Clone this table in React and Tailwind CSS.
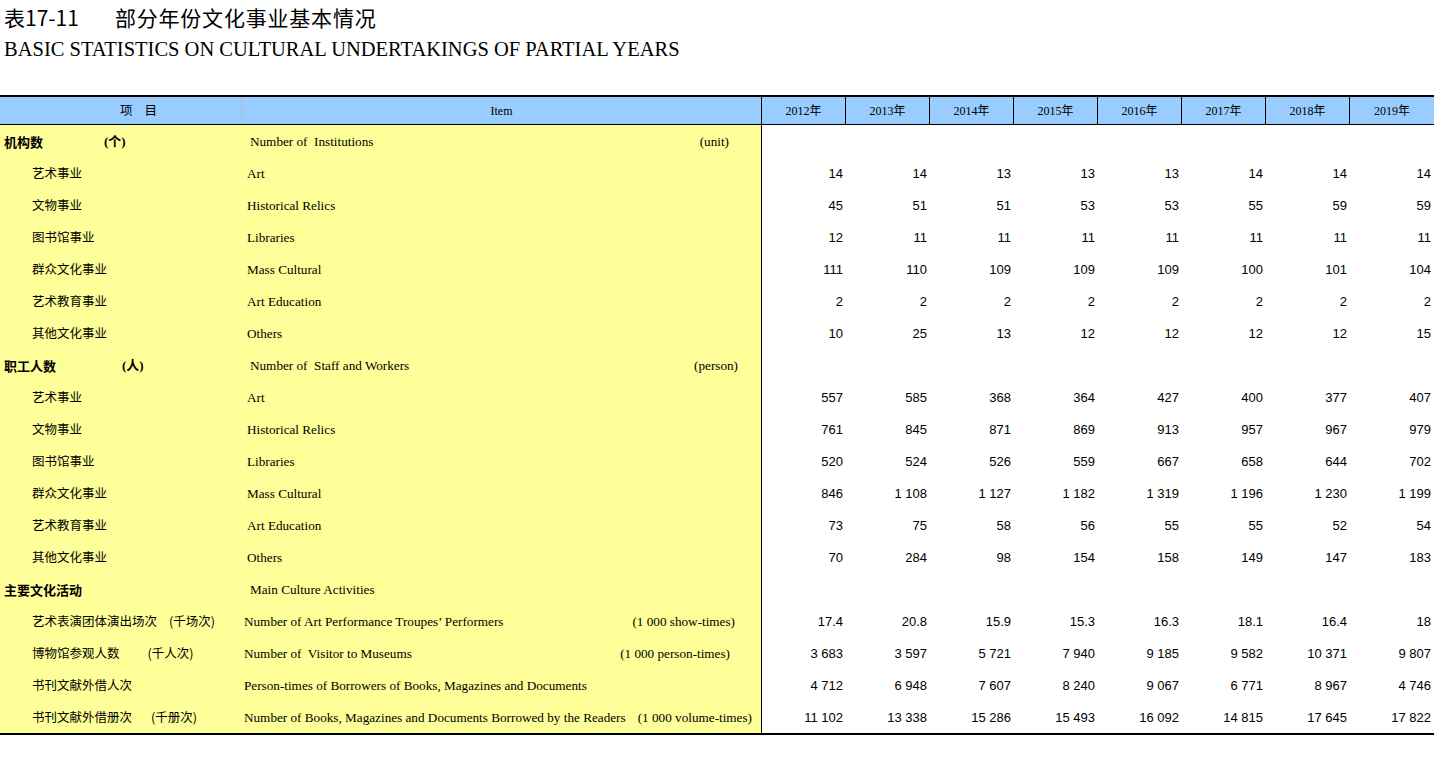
import React from 'react';

const serif = "font-['Liberation_Serif','Times_New_Roman','Noto_Sans_CJK_SC',serif]";
const cjk = "font-['Noto_Sans_CJK_SC','Liberation_Sans',sans-serif]";
const arial = "font-['Liberation_Sans',Arial,sans-serif]";

const years = ['2012', '2013', '2014', '2015', '2016', '2017', '2018', '2019'];

// kind: head = bold group title, sub = indented item
const rows = [
  { kind: 'head', zh: '机构数', zhUnit: '(个)', zhUnitX: 'pl-[61px]', en: 'Number of  Institutions', enX: 'pl-[8px]', unit: '(unit)', unitR: 'pr-[32px]' },
  { zh: '艺术事业', en: 'Art', vals: ['14', '14', '13', '13', '13', '14', '14', '14'] },
  { zh: '文物事业', en: 'Historical Relics', vals: ['45', '51', '51', '53', '53', '55', '59', '59'] },
  { zh: '图书馆事业', en: 'Libraries', vals: ['12', '11', '11', '11', '11', '11', '11', '11'] },
  { zh: '群众文化事业', en: 'Mass Cultural', vals: ['111', '110', '109', '109', '109', '100', '101', '104'] },
  { zh: '艺术教育事业', en: 'Art Education', vals: ['2', '2', '2', '2', '2', '2', '2', '2'] },
  { zh: '其他文化事业', en: 'Others', vals: ['10', '25', '13', '12', '12', '12', '12', '15'] },
  { kind: 'head', zh: '职工人数', zhUnit: '(人)', zhUnitX: 'pl-[66px]', en: 'Number of  Staff and Workers', enX: 'pl-[8px]', unit: '(person)', unitR: 'pr-[23px]' },
  { zh: '艺术事业', en: 'Art', vals: ['557', '585', '368', '364', '427', '400', '377', '407'] },
  { zh: '文物事业', en: 'Historical Relics', vals: ['761', '845', '871', '869', '913', '957', '967', '979'] },
  { zh: '图书馆事业', en: 'Libraries', vals: ['520', '524', '526', '559', '667', '658', '644', '702'] },
  { zh: '群众文化事业', en: 'Mass Cultural', vals: ['846', '1 108', '1 127', '1 182', '1 319', '1 196', '1 230', '1 199'] },
  { zh: '艺术教育事业', en: 'Art Education', vals: ['73', '75', '58', '56', '55', '55', '52', '54'] },
  { zh: '其他文化事业', en: 'Others', vals: ['70', '284', '98', '154', '158', '149', '147', '183'] },
  { kind: 'head', zh: '主要文化活动', en: 'Main Culture Activities', enX: 'pl-[8px]' },
  { zh: '艺术表演团体演出场次', zhUnit: '(千场次)', zhUnitX: 'pl-[12px]', en: 'Number of Art Performance Troupes’ Performers', enX: 'pl-[2px]', unit: '(1 000 show-times)', unitR: 'pr-[26px]', vals: ['17.4', '20.8', '15.9', '15.3', '16.3', '18.1', '16.4', '18'] },
  { zh: '博物馆参观人数', zhUnit: '(千人次)', zhUnitX: 'pl-[28px]', en: 'Number of  Visitor to Museums', enX: 'pl-[2px]', unit: '(1 000 person-times)', unitR: 'pr-[31px]', vals: ['3 683', '3 597', '5 721', '7 940', '9 185', '9 582', '10 371', '9 807'] },
  { zh: '书刊文献外借人次', en: 'Person-times of Borrowers of Books, Magazines and Documents', enX: 'pl-[2px]', vals: ['4 712', '6 948', '7 607', '8 240', '9 067', '6 771', '8 967', '4 746'] },
  { zh: '书刊文献外借册次', zhUnit: '(千册次)', zhUnitX: 'pl-[19px]', en: 'Number of Books, Magazines and Documents Borrowed by the Readers', enX: 'pl-[2px]', unit: '(1 000 volume-times)', unitR: 'pr-[9px]', vals: ['11 102', '13 338', '15 286', '15 493', '16 092', '14 815', '17 645', '17 822'] },
];

const grid = 'grid grid-cols-[242px_520px_repeat(8,84px)]';

function BodyRow({ row }) {
  const head = row.kind === 'head';
  return (
    <div className={`${grid} h-8`}>
      <div className={`bg-[#ffff99] flex items-center pt-[1px] ${head ? 'pl-[4px]' : 'pl-[32px]'}`}>
        <span className={`${cjk} ${head ? 'text-[13px] font-bold' : 'text-[12.5px]'} text-black whitespace-nowrap`}>{row.zh}</span>
        {row.zhUnit && (
          <span className={`${head ? serif + ' text-[13px] font-bold' : cjk + ' text-[12.5px]'} ${row.zhUnitX} text-black whitespace-nowrap`}>{row.zhUnit}</span>
        )}
      </div>
      <div className={`bg-[#ffff99] border-r border-black flex items-center justify-between pt-[1px] ${row.enX || 'pl-[5px]'} ${row.unitR || ''}`}>
        <span className={`${serif} text-[13.2px] text-black whitespace-pre`}>{row.en}</span>
        {row.unit && <span className={`${serif} text-[13.2px] text-black whitespace-pre`}>{row.unit}</span>}
      </div>
      {years.map((y, i) => (
        <div key={y} className="flex items-center justify-end pr-[3px] pt-[2px]">
          <span className={`${arial} text-[13px] text-black whitespace-pre`}>{row.vals ? row.vals[i] : ''}</span>
        </div>
      ))}
    </div>
  );
}

export default function App() {
  return (
    <div className="w-[1435px] min-h-[766px] bg-white">
      <div className="px-[4px]">
        <div className={`${cjk} text-[21px] leading-[24px] pt-[5px] text-black flex whitespace-nowrap`}>
          <span>表17-11</span>
          <span className="pl-[36px] tracking-[0.8px]">部分年份文化事业基本情况</span>
        </div>
        <div className={`${serif} text-[20.5px] leading-[24px] mt-[8px] text-black whitespace-nowrap`}>
          BASIC STATISTICS ON CULTURAL UNDERTAKINGS OF PARTIAL YEARS
        </div>
      </div>

      <div className="mt-[34px] w-[1434px] border-t-2 border-b-2 border-black">
        <div className={`${grid} h-[28px] bg-[#99ccff] border-b border-black`}>
          <div className="border-r border-[#a9bccf] flex items-center pl-[120px] gap-[12px]">
            <span className={`${cjk} text-[12.5px] text-black`}>项</span>
            <span className={`${cjk} text-[12.5px] text-black`}>目</span>
          </div>
          <div className="border-r border-black flex items-center justify-center">
            <span className={`${serif} text-[12px] text-black`}>Item</span>
          </div>
          {years.map((y, i) => (
            <div key={y} className={`flex items-center justify-center ${i < 7 ? 'border-r border-black' : ''}`}>
              <span className={`${serif} text-[12px] text-black`}>{y}年</span>
            </div>
          ))}
        </div>
        {rows.map((r, i) => (
          <BodyRow key={i} row={r} />
        ))}
      </div>
    </div>
  );
}
